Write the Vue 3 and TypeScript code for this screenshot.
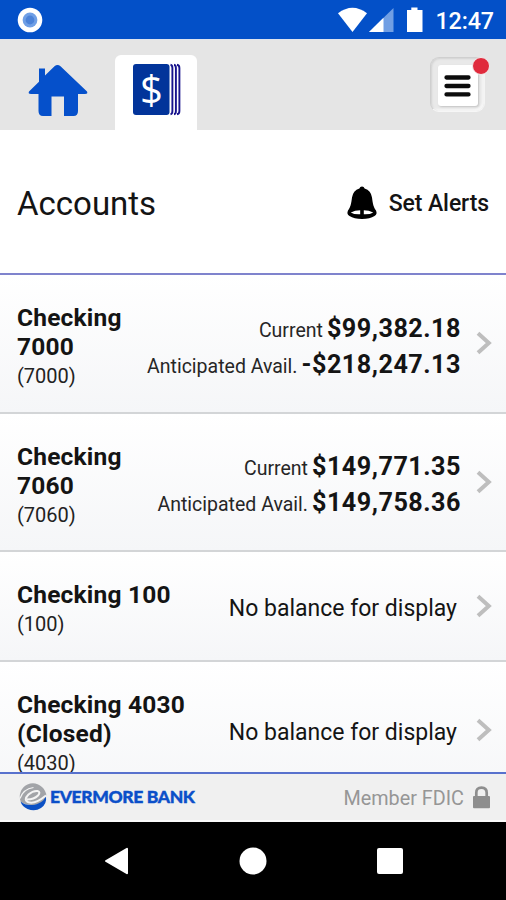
<script setup lang="ts">
interface Balance {
  label: string
  amount: string
}
interface Account {
  id: string
  name: string[]
  number: string
  balances: Balance[]
}

const accounts: Account[] = [
  {
    id: 'a7000',
    name: ['Checking', '7000'],
    number: '(7000)',
    balances: [
      { label: 'Current', amount: '$99,382.18' },
      { label: 'Anticipated Avail.', amount: '-$218,247.13' },
    ],
  },
  {
    id: 'a7060',
    name: ['Checking', '7060'],
    number: '(7060)',
    balances: [
      { label: 'Current', amount: '$149,771.35' },
      { label: 'Anticipated Avail.', amount: '$149,758.36' },
    ],
  },
  { id: 'a100', name: ['Checking 100'], number: '(100)', balances: [] },
  { id: 'a4030', name: ['Checking 4030', '(Closed)'], number: '(4030)', balances: [] },
]
</script>

<template>
  <div class="phone">
    <div class="status">
      <svg class="status-dot" width="26" height="26" viewBox="0 0 26 26">
        <circle cx="13" cy="13" r="12.3" fill="#fff" />
        <circle cx="13" cy="13" r="7.4" fill="#6f9fe6" />
        <circle cx="13" cy="13" r="4.4" fill="#4b82d8" />
      </svg>
      <div class="status-right">
        <svg width="88" height="26" viewBox="0 0 88 26">
          <path d="M1 6.200Q15.500 -4.800 30 6.200L15.500 25Z" fill="#fff" />
          <path d="M32 25L56.500 1V25Z" fill="#719fe4" />
          <path d="M32 25L46.500 10.800V25Z" fill="#fff" />
          <path d="M70 3H74.300V.5H80.500V3H85.500V25H70Z" fill="#fff" />
        </svg>
        <span class="clock">12:47</span>
      </div>
    </div>

    <header class="tabs">
      <button class="tab home" aria-label="Home">
        <svg width="60" height="54" viewBox="0 0 60 54">
          <path
            d="M26.500 2.200Q29.500 -.4 32.500 2.200L59 27.500Q60.200 30 57 30H50V47Q50 52 45.500 52H36V32.500H23.500V52H15Q10.500 52 10.500 47V30H3Q-.2 30 1 27.500L11 17.800V4.500H17V11.500Z"
            fill="#0550cb"
          />
        </svg>
      </button>
      <button class="tab active" aria-label="Accounts">
        <svg width="50" height="54" viewBox="0 0 50 54">
          <rect x="2" y="1" width="36.500" height="51" rx="3" fill="#02349a" />
          <path d="M39.500 1.700Q41.400 2 41.400 5V48Q41.400 51 39.500 51.300" class="page" />
          <path d="M43 1.700Q44.900 2 44.900 5V48Q44.900 51 43 51.300" class="page" />
          <path d="M46 1.700Q48.400 2 48.400 5V48Q48.400 51 46 51.300" class="page" />
          <text x="20.500" y="40.500" class="dollar">$</text>
        </svg>
      </button>
      <button class="menu" aria-label="Menu">
        <span class="menu-face">
          <svg width="28" height="24" viewBox="0 0 28 24">
            <path
              d="M2.500 3.500H24.500M2.500 12H24.500M2.500 20.400H24.500"
              stroke="#0c0c0c"
              stroke-width="4.300"
              stroke-linecap="round"
            />
          </svg>
        </span>
        <span class="badge"></span>
      </button>
    </header>

    <section class="heading">
      <h1>Accounts</h1>
      <a class="alerts">
        <svg width="30" height="34" viewBox="0 0 30 34">
          <path
            d="M15 .5Q17 .5 17.600 2.500Q24 4.500 25 11.500C25.800 18 26.500 21 29 24.500Q30.700 28 27.500 30Q23 33 15 33Q7 33 2.500 30Q-.7 28 1 24.500C3.500 21 4.200 18 5 11.500Q6 4.500 12.400 2.500Q13 .5 15 .5Z"
            fill="#000"
          />
          <path d="M3.800 26.500Q8 24.300 13.200 24.300V28.300Q7 28.600 3.800 26.500ZM26.200 26.500Q22 24.300 16.800 24.300V28.300Q23 28.600 26.200 26.500Z" fill="#fff" />
        </svg>
        <span>Set Alerts</span>
      </a>
    </section>

    <main class="list">
      <article v-for="acc in accounts" :key="acc.id" class="row">
        <div class="who">
          <div v-for="line in acc.name" :key="line" class="name">{{ line }}</div>
          <div class="number">{{ acc.number }}</div>
        </div>
        <div v-if="acc.balances.length" class="balances">
          <div v-for="b in acc.balances" :key="b.label" class="balance">
            <span class="label">{{ b.label }}</span>
            <span class="amount">{{ b.amount }}</span>
          </div>
        </div>
        <div v-else class="none">No balance for display</div>
        <svg class="chevron" width="16" height="24" viewBox="0 0 16 24">
          <path d="M2 2.300L12.800 12L2 21.700" fill="none" stroke="#bebebe" stroke-width="4" />
        </svg>
      </article>
    </main>

    <footer class="footer">
      <div class="brand">
        <svg width="28" height="28" viewBox="0 0 28 28">
          <path d="M2 19A12.900 12.900 0 0 1 26 8Q28 11 27 14Q24 21 14 22Q6 22 2 19Z" fill="#a2a4a8" />
          <path d="M1.500 18.500Q6 22.500 14 22Q23 21 27 13.500Q28 21 22 25Q16 29 8.500 26Q3 23.500 1.500 18.500Z" fill="#0b50c4" />
          <path
            d="M8 16.500Q15 16.500 19 12.500Q22 9 18.500 8Q14 7.500 9.500 11.500Q4 17 9.500 19.300Q16 21.500 27 12.500"
            fill="none"
            stroke="#f4f4f4"
            stroke-width="2"
          />
          <path d="M1 15.500Q4 6 14.500 4.500" fill="none" stroke="#f4f4f4" stroke-width="1.200" />
        </svg>
        <span class="brand-name">EVERMORE BANK</span>
      </div>
      <div class="fdic">
        <span>Member FDIC</span>
        <svg width="17" height="23" viewBox="0 0 17 23">
          <path d="M3.300 11V6.800Q3.300 1.600 8.500 1.600Q13.700 1.600 13.700 6.800V11" fill="none" stroke="#8e8e8e" stroke-width="2.700" />
          <rect x="0" y="10" width="17" height="12.300" rx="1" fill="#8e8e8e" />
        </svg>
      </div>
    </footer>

    <nav class="navbar">
      <svg width="25" height="28" viewBox="0 0 25 28">
        <path d="M2 14L23 1.800V26.200Z" fill="#fff" stroke="#fff" stroke-width="2" stroke-linejoin="round" />
      </svg>
      <svg width="28" height="28" viewBox="0 0 28 28"><circle cx="14" cy="14" r="13.500" fill="#fff" /></svg>
      <svg width="26" height="26" viewBox="0 0 26 26"><rect width="26" height="26" rx="2" fill="#fff" /></svg>
    </nav>
  </div>
</template>

<style>
body {
  margin: 0;
  background: #fff;
}
</style>

<style scoped>
.phone {
  width: 506px;
  height: 900px;
  display: flex;
  flex-direction: column;
  overflow: hidden;
  background: #fff;
  color: #141414;
  font-family: Roboto, sans-serif;
}
svg {
  display: block;
  flex: none;
  overflow: visible;
}
.status {
  flex: none;
  height: 39px;
  box-sizing: border-box;
  padding: 0 12px 0 17px;
  display: flex;
  align-items: center;
  justify-content: space-between;
  background: #0350c8;
}
.status-right {
  display: flex;
  align-items: center;
  gap: 10px;
}
.clock {
  color: #fff;
  font-size: 23.3px;
  font-weight: 500;
  line-height: 28px;
  padding-top: 3px;
  letter-spacing: -0.1px;
}
.tabs {
  flex: none;
  height: 91px;
  box-sizing: border-box;
  border-top: 1px solid #dfe4ee;
  display: flex;
  align-items: flex-end;
  padding: 0 21px 0 28px;
  background: #e5e5e5;
}
.tab,
.menu {
  padding: 0;
  border: 0;
  background: none;
}
.home {
  width: 60px;
  margin-right: 27px;
  padding-bottom: 12px;
}
.active {
  width: 82px;
  height: 75px;
  display: flex;
  justify-content: center;
  padding-top: 8px;
  background: #fff;
  border-radius: 6px 6px 0 0;
}
.page {
  fill: none;
  stroke: #17128c;
  stroke-width: 1.900;
}
.dollar {
  fill: #fff;
  font-family: "Open Sans", sans-serif;
  font-size: 40px;
  font-weight: 400;
  text-anchor: middle;
}
.menu {
  position: relative;
  box-sizing: border-box;
  width: 55px;
  height: 55px;
  margin: 0 0 18px auto;
  padding: 7px 6px 7px 7px;
  border: 1px solid;
  border-color: #cfcfcf #f4f4f4 #f6f6f6 #cfcfcf;
  border-radius: 9px;
  background: #e9e9e9;
  box-shadow: inset 1px 1px 2px #d2d2d2, inset -2px -2px 2px #f6f6f6;
}
.menu-face {
  display: flex;
  align-items: center;
  justify-content: center;
  width: 40px;
  height: 41px;
  border-radius: 3px;
  background: #fff;
  box-shadow: 1px 1px 2px #c4c4c4;
}
.badge {
  position: absolute;
  top: -1px;
  right: -6px;
  width: 16px;
  height: 16px;
  border: 1.500px solid #f3ecec;
  border-radius: 50%;
  background: #e02a3c;
}
.heading {
  flex: none;
  height: 145px;
  box-sizing: border-box;
  padding: 0 17px 0 17px;
  border-bottom: 2px solid #7f83cd;
  display: flex;
  align-items: center;
  justify-content: space-between;
}
h1 {
  margin: 0;
  padding-top: 5px;
  font-size: 33px;
  font-weight: 400;
  line-height: 40px;
}
.alerts {
  display: flex;
  align-items: center;
  gap: 12px;
  padding-top: 3px;
  font-size: 23px;
  line-height: 28px;
  font-weight: 500;
}
.alerts span {
  padding-top: 2px;
  letter-spacing: -0.1px;
}
.list {
  flex: 1;
  min-height: 0;
  overflow: hidden;
}
.row {
  display: flex;
  align-items: center;
  box-sizing: border-box;
  padding: 28px 14px 21.6px 17px;
  border-bottom: 2px solid #d3d5d7;
  background: linear-gradient(#fff, #f5f6f8);
}
.who {
  flex: 1;
}
.name {
  font-size: 24.5px;
  line-height: 29px;
  font-weight: 700;
  letter-spacing: 0.2px;
  white-space: nowrap;
}
.number {
  font-size: 20px;
  line-height: 29px;
  padding-top: 1px;
  margin-bottom: -1px;
  color: #222;
}
.balance {
  display: flex;
  align-items: baseline;
  justify-content: flex-end;
  gap: 4px;
  height: 36px;
  line-height: 36px;
  white-space: nowrap;
}
.label {
  color: #262626;
  font-size: 19.5px;
}
.amount {
  font-size: 25.2px;
  font-weight: 700;
  letter-spacing: 0.5px;
}
.none {
  padding-right: 4px;
  font-size: 23px;
  line-height: 28px;
  white-space: nowrap;
}
.chevron {
  margin: -7px 0 0 15px;
}
.footer {
  flex: none;
  height: 50px;
  box-sizing: border-box;
  padding: 0 16px 0 19px;
  border-top: 2px solid #5871cd;
  border-bottom: 2px solid #fbfbfb;
  display: flex;
  align-items: center;
  justify-content: space-between;
  background: #f0f0f0;
}
.brand,
.fdic {
  display: flex;
  align-items: center;
}
.brand {
  gap: 3px;
}
.brand-name {
  color: #0b4fc9;
  font-family: Lato, sans-serif;
  font-size: 17.5px;
  font-weight: 900;
  line-height: 24px;
  letter-spacing: -0.38px;
  -webkit-text-stroke: 0.4px #0b4fc9;
}
.fdic {
  gap: 9px;
  color: #969696;
  font-size: 19.8px;
}
.fdic span {
  padding-top: 2px;
}
.navbar {
  flex: none;
  height: 78px;
  box-sizing: border-box;
  padding: 0 103px 0 104px;
  display: flex;
  align-items: center;
  justify-content: space-between;
  background: #000;
}
</style>
